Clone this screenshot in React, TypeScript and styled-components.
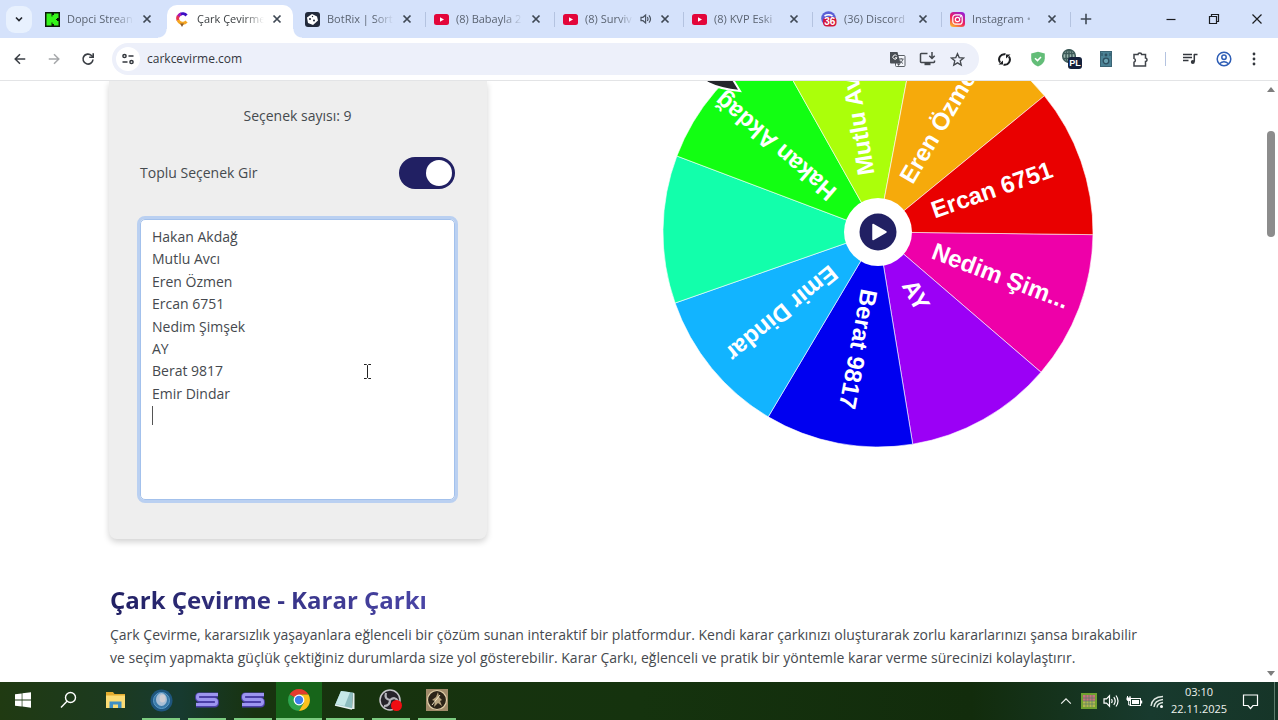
import React from 'react';
import styled, { createGlobalStyle } from 'styled-components';

const Global = createGlobalStyle`
  * { box-sizing: border-box; }
  html, body { margin: 0; padding: 0; }
  body { font-family: "Open Sans", "Noto Sans", sans-serif; background: #fff; color: #3c4043; overflow: hidden; }
  button { font: inherit; color: inherit; border: 0; background: none; padding: 0; }
  a { color: inherit; text-decoration: none; }
  svg { display: block; flex: none; }
`;

const Window = styled.div`
  display: flex;
  flex-direction: column;
  height: 100vh;
`;

/* ---------- tab strip ---------- */

const TabStrip = styled.header`
  display: flex;
  align-items: center;
  height: 38px;
  flex: none;
  background: #d5e2fb;
  padding-left: 6px;
`;

const TabSearch = styled.button`
  display: grid;
  place-items: center;
  width: 26px;
  height: 27px;
  border-radius: 9px;
  background: #e8f1fe;
  margin-right: 5px;
`;

const TabList = styled.nav`
  display: flex;
  align-self: stretch;
`;

const Tab = styled.div<{ $active?: boolean }>`
  position: relative;
  display: flex;
  align-items: center;
  width: ${(p) => (p.$active ? 126 : 129)}px;
  margin: ${(p) => (p.$active ? '5px 4px 0 1px' : '0')};
  padding: ${(p) => (p.$active ? '0 7px 5px 8px' : '0 10px 0 8px')};
  border-radius: 10px 10px 0 0;
  background: ${(p) => (p.$active ? '#fff' : 'transparent')};
  color: ${(p) => (p.$active ? '#3c4043' : '#5b6472')};

  &::before,
  &::after {
    content: '';
    display: ${(p) => (p.$active ? 'block' : 'none')};
    position: absolute;
    bottom: 0;
    width: 9px;
    height: 9px;
  }
  &::before {
    left: -9px;
    background: radial-gradient(circle at 0 0, transparent 8px, #fff 9px);
  }
  &::after {
    right: -9px;
    background: radial-gradient(circle at 100% 0, transparent 8px, #fff 9px);
  }
`;

const TabLink = styled.a`
  display: flex;
  align-items: center;
  flex: 1;
  min-width: 0;
  gap: 7px;
`;

const TabTitle = styled.span`
  flex: 1;
  min-width: 0;
  overflow: hidden;
  white-space: nowrap;
  font-size: 11px;
  line-height: 16px;
  -webkit-mask-image: linear-gradient(to right, #000 70%, transparent);
  mask-image: linear-gradient(to right, #000 70%, transparent);
`;

const TabClose = styled.button`
  display: grid;
  place-items: center;
  width: 18px;
  height: 18px;
  margin-left: 4px;
`;

const Divider = styled.i<{ $h: number }>`
  width: 1px;
  height: ${(p) => p.$h}px;
  background: #b4c3e0;
  flex: none;
`;

const TabDivider = styled(Divider)`
  align-self: center;
  margin-left: -1px;
`;

const NewTab = styled.button`
  display: grid;
  place-items: center;
  width: 30px;
  height: 30px;
`;

const WindowControls = styled.div`
  display: flex;
  margin-left: auto;
`;

const WindowButton = styled.button`
  display: grid;
  place-items: center;
  width: 43px;
  height: 38px;
`;

/* ---------- toolbar ---------- */

const Toolbar = styled.div`
  display: flex;
  align-items: center;
  height: 43px;
  flex: none;
  background: #fff;
  border-bottom: 1px solid #e3e4e6;
  padding: 0 4px 0 3px;
`;

const ToolButton = styled.button<{ $w?: number; $faded?: boolean }>`
  display: grid;
  place-items: center;
  width: ${(p) => p.$w ?? 34}px;
  height: 32px;
  opacity: ${(p) => (p.$faded ? 0.45 : 1)};
`;

const Extensions = styled.div`
  display: flex;
  align-items: center;
  margin-right: 8px;
`;

const Omnibox = styled.div`
  display: flex;
  align-items: center;
  flex: 1;
  height: 32px;
  margin: 0 8px 0 7px;
  padding: 0 7px 0 4px;
  border-radius: 16px;
  background: #edf0fa;
`;

const SiteInfo = styled.button`
  display: grid;
  place-items: center;
  width: 24px;
  height: 24px;
  border-radius: 12px;
  background: #fff;
`;

const Address = styled.input`
  flex: 1;
  min-width: 0;
  border: 0;
  outline: 0;
  background: none;
  padding: 0 0 0 7px;
  font: 12px/20px "Open Sans", "Noto Sans", sans-serif;
  color: #33373d;
`;

/* ---------- page ---------- */

const Viewport = styled.div`
  display: flex;
  flex: 1;
  min-height: 0;
  background: #fff;
`;

const Page = styled.main`
  flex: 1;
  min-width: 0;
  overflow: hidden;
`;

const Container = styled.div`
  max-width: 1046px;
  margin: 0 auto;
`;

const Tool = styled.section`
  display: grid;
  grid-template-columns: 378px 1fr;
  column-gap: 113px;
  align-items: start;
`;

const Card = styled.form`
  display: flex;
  flex-direction: column;
  padding: 23px 32px 39px 31px;
  border-radius: 0 0 8px 8px;
  background: #eeeeee;
  box-shadow: 0 3px 6px rgba(0, 0, 0, 0.18);
  font-size: 14px;
  line-height: 24px;
  color: #454a4f;
`;

const Count = styled.p`
  margin: 0;
  text-align: center;
`;

const ToggleRow = styled.label`
  display: flex;
  justify-content: space-between;
  align-items: center;
  margin: 29px 0 30px;
`;

const Toggle = styled.input`
  appearance: none;
  display: flex;
  width: 56px;
  height: 32px;
  margin: 0;
  padding: 3px;
  border-radius: 16px;
  background: #212063;

  &::before {
    content: '';
    width: 26px;
    height: 26px;
    border-radius: 13px;
    background: #fff;
  }
  &:checked {
    justify-content: flex-end;
  }
`;

const Editor = styled.div`
  position: relative;
`;

const OptionsBox = styled.textarea`
  display: block;
  width: 100%;
  height: 281px;
  resize: none;
  padding: 6px 11px;
  border: 1px solid #a3c1ec;
  border-radius: 5px;
  outline: 3px solid #bad0f1;
  background: #fff;
  font: 14px/1.6 "Open Sans", "Noto Sans", sans-serif;
  color: #45494e;
`;

const Caret = styled.i`
  position: absolute;
  left: 12px;
  top: 187px;
  width: 1px;
  height: 19px;
  background: #555;
`;

const Pointer = styled.svg`
  position: absolute;
  left: 223px;
  top: 145px;
`;

const WheelArea = styled.div`
  display: flex;
  justify-content: center;
`;

const Article = styled.article`
  margin-top: 44px;
  padding: 0 1px;
`;

const Heading = styled.h1`
  width: fit-content;
  margin: 0;
  font-size: 24px;
  line-height: 34px;
  font-weight: 700;
  background: linear-gradient(90deg, #212063, #4a45a6);
  -webkit-background-clip: text;
  background-clip: text;
  color: transparent;
`;

const Copy = styled.p`
  margin: 6px 0 0;
  font-size: 14px;
  line-height: 23px;
  color: #45494e;
`;

const ScrollTrack = styled.div`
  display: flex;
  flex-direction: column;
  align-items: center;
  width: 14px;
  padding: 6px 0;
`;

const ScrollThumb = styled.div`
  width: 8px;
  height: 106px;
  margin-top: 39px;
  margin-bottom: auto;
  border-radius: 4px;
  background: #8c8c8c;
`;

/* ---------- taskbar ---------- */

const Taskbar = styled.footer`
  display: flex;
  align-items: stretch;
  height: 38px;
  flex: none;
  background: linear-gradient(90deg, #203a12 0%, #1c3a20 9%, #173a30 14%, #18330f 20%, #15330e 50%, #122c0c 76%, #183a2e 90%, #163528 100%);
  color: #eef2ee;
`;

const TaskButton = styled.button<{ $open?: boolean; $active?: boolean }>`
  display: flex;
  flex-direction: column;
  align-items: center;
  width: 46px;
  background: ${(p) => (p.$active ? '#17651a' : 'none')};

  &::after {
    content: '';
    width: ${(p) => (p.$active ? 46 : 38)}px;
    height: 2px;
    background: ${(p) => (p.$open ? '#7ccb80' : 'transparent')};
  }
`;

const TaskIcon = styled.span`
  display: grid;
  place-items: center;
  flex: 1;
`;

const Tray = styled.div`
  display: flex;
  align-items: center;
  margin-left: auto;
`;

const TrayButton = styled.button<{ $w?: number }>`
  display: grid;
  place-items: center;
  width: ${(p) => p.$w ?? 23}px;
  height: 38px;
`;

const Clock = styled.time`
  width: 60px;
  padding-bottom: 2px;
  text-align: center;
  font-size: 11px;
  line-height: 17px;
  white-space: nowrap;
`;

const ShowDesktop = styled.i`
  align-self: stretch;
  width: 4px;
  margin-left: 3px;
  border-left: 1px solid #5d7a6c;
`;

/* ---------- icons ---------- */

type LineProps = { d: string; s?: number; w?: number; c?: string };

const Line = ({ d, s = 16, w = 2, c = 'currentColor' }: LineProps) => (
  <svg width={s} height={s} viewBox="0 0 16 16" fill="none" stroke={c} strokeWidth={w}>
    <path d={d} />
  </svg>
);

const Cross = () => <Line d="M4 4l8 8M12 4l-8 8" s={14} w={2} c="#3f4854" />;

const KickIcon = () => (
  <svg width="15" height="15" viewBox="0 0 15 15">
    <rect width="15" height="15" fill="#0b1a08" />
    <path d="M1.500 1.500h5v3h1v-1.500h1.500v-1.500h4.500v4.500h-1.500v1h-1v1h1v1h1.500v4.500h-4.500v-1.500h-1.500v-1.500h-1v3h-5z" fill="#35f51b" />
  </svg>
);

const CarkIcon = () => (
  <svg width="15" height="15" viewBox="0 0 15 15" fill="none" strokeWidth="3">
    <path d="M11.500 3.500A5 5 0 0 0 5 2.500" stroke="#3c0fc4" />
    <path d="M6 2A5 5 0 0 0 3 5" stroke="#a51bb5" />
    <path d="M3.200 4A5 5 0 0 0 3 8.500" stroke="#e8334d" />
    <path d="M3 8A5 5 0 0 0 11.500 9.500" stroke="#f5a623" />
    <path d="M5 11.500h4l-2 3.500z" fill="#8a5a2b" />
  </svg>
);

const BotIcon = () => (
  <svg width="15" height="15" viewBox="0 0 15 15">
    <rect width="15" height="15" rx="3" fill="#222a3b" />
    <path d="M7 2l5 2.500 1 4-5 4.500L3 11 2 5.500z" fill="#fff" />
    <circle cx="5" cy="7" r="1" fill="#222a3b" />
    <circle cx="9" cy="8.500" r="1" fill="#222a3b" />
    <circle cx="7.500" cy="4.500" r=".7" fill="#222a3b" />
  </svg>
);

const YoutubeIcon = () => (
  <svg width="15" height="15" viewBox="0 0 15 15">
    <rect y="2" width="15" height="11" rx="2.500" fill="#e3063a" />
    <path d="M6 5.200l4 2.300-4 2.300z" fill="#fff" />
  </svg>
);

const DiscordIcon = () => (
  <svg width="16" height="16" viewBox="0 0 16 16">
    <circle cx="7.500" cy="7.500" r="7.300" fill="#5b5fd6" />
    <path d="M3.500 5q4-2.500 8 0" stroke="#fff" strokeWidth="1.500" fill="none" />
    <rect x="2" y="6" width="13.500" height="9.500" rx="4" fill="#d3163a" />
    <text x="8.700" y="14" fontFamily="Liberation Sans, sans-serif" fontWeight="700" fontSize="10" textAnchor="middle" fill="#fff">36</text>
  </svg>
);

const InstagramIcon = () => (
  <svg width="15" height="15" viewBox="0 0 15 15">
    <defs>
      <linearGradient id="insta" x1=".2" y1="1" x2=".8" y2="0">
        <stop offset="0" stopColor="#fdb52e" />
        <stop offset=".45" stopColor="#ee1f5f" />
        <stop offset="1" stopColor="#9a1fd6" />
      </linearGradient>
    </defs>
    <rect width="15" height="15" rx="3.500" fill="url(#insta)" />
    <rect x="2.800" y="2.800" width="9.400" height="9.400" rx="2.800" fill="none" stroke="#fff" strokeWidth="1.200" />
    <circle cx="7.500" cy="7.500" r="2.200" fill="none" stroke="#fff" strokeWidth="1.200" />
    <circle cx="10.400" cy="4.700" r=".7" fill="#fff" />
  </svg>
);

const SpeakerIcon = () => (
  <svg width="12" height="12" viewBox="0 0 12 12" fill="none" stroke="#4a5361" strokeWidth="1.200">
    <path d="M1 4.300h2l2.600-2.300v8L3 7.700H1z" />
    <path d="M7.300 4q1.400 2 0 4M9 2.300q3 3.700 0 7.400" />
  </svg>
);

const TuneIcon = () => (
  <svg width="14" height="14" viewBox="0 0 14 14" fill="none" stroke="#33373d" strokeWidth="1.500">
    <circle cx="3.500" cy="4" r="1.600" />
    <path d="M7.500 4h5M1.500 10h5" />
    <circle cx="10.500" cy="10" r="1.600" />
  </svg>
);

const ReloadIcon = () => (
  <svg width="14" height="14" viewBox="0 0 14 14" fill="none" stroke="#3a3e44" strokeWidth="1.600">
    <path d="M12 7.500A5 5 0 1 1 10.500 3.500L12 5" />
    <path d="M12.200 1.200v4h-4" />
  </svg>
);

const TranslateIcon = () => (
  <svg width="17" height="17" viewBox="0 0 17 17">
    <rect x="6.500" y="4.500" width="9.500" height="11" rx="1" fill="#f4f6fb" stroke="#5a5f66" />
    <path d="M1 1h7.500l3 11.500H2a1 1 0 0 1-1-1z" fill="#4a4f56" />
    <path d="M7.700 4.800a2.100 2.100 0 1 0 .3 2H6" fill="none" stroke="#fff" strokeWidth="1" />
    <path d="M10 8h4.500M12.200 7v1M14 8q-.7 3-3 4M11 9.500q1 2 3 3" stroke="#5a5f66" fill="none" />
    <path d="M8 12.500h3.500l-2 2.500z" fill="#4a4f56" />
  </svg>
);

const InstallIcon = () => (
  <svg width="17" height="16" viewBox="0 0 17 16" fill="none" stroke="#43474d" strokeWidth="1.500">
    <path d="M8.500 2.500H2.200a.7.700 0 0 0-.7.700v7.600c0 .4.300.7.700.7h12.600a.7.700 0 0 0 .7-.7V9.500" />
    <path d="M13 1v6M10.300 4.800L13 7.500l2.700-2.700" />
    <path d="M5.500 12h6v2.200h-6z" fill="#43474d" stroke="none" />
  </svg>
);

const StarIcon = () => (
  <svg width="15" height="15" viewBox="0 0 16 16" fill="none" stroke="#43474d" strokeWidth="1.400">
    <path d="M8 1.800l1.800 4.200 4.700.4-3.600 3 1.100 4.600L8 11.600 4 14l1.100-4.600-3.600-3L6.200 6z" />
  </svg>
);

const SyncIcon = () => (
  <svg width="15" height="15" viewBox="0 0 15 15" fill="none" stroke="#1d1f22" strokeWidth="2">
    <path d="M8.500 2.300A5.200 5.200 0 0 0 3.200 10.500M6.500 12.700A5.200 5.200 0 0 0 11.800 4.500" />
    <path d="M1.500 12.500h4.500V8.500zM13.500 2.500H9v4z" fill="#1d1f22" stroke="none" />
  </svg>
);

const ShieldIcon = () => (
  <svg width="16" height="16" viewBox="0 0 16 16">
    <path d="M8 .8l6.800 1.800v4.800q0 5-6.800 8-6.800-3-6.800-8V2.600z" fill="#63bd78" />
    <path d="M5 7.200l2.500 2.400L11 6" stroke="#fff" strokeWidth="1.500" fill="none" />
  </svg>
);

const GlobeIcon = () => (
  <svg width="22" height="22" viewBox="0 0 22 22">
    <g fill="none" stroke="#3c5a58" strokeWidth="1.500">
      <circle cx="8" cy="8" r="6.300" fill="#9bb5ae" />
      <ellipse cx="8" cy="8" rx="3" ry="6.300" />
      <path d="M2 5.500h12M2 10.500h12M8 1.700v12.600" />
    </g>
    <rect x="7" y="9" width="14" height="12" rx="3" fill="#15213c" />
    <text x="14" y="18.300" fontFamily="Liberation Sans, sans-serif" fontWeight="700" fontSize="9" textAnchor="middle" fill="#fff">PL</text>
  </svg>
);

const CabinetIcon = () => (
  <svg width="12" height="16" viewBox="0 0 12 16">
    <rect x=".5" y=".5" width="11" height="15" fill="#4b8295" stroke="#3b6474" />
    <circle cx="6" cy="10" r="2.800" fill="#6aa2b2" stroke="#2d4f60" strokeWidth="1.300" />
    <circle cx="6" cy="4" r="1.400" fill="#2d4f60" />
    <path d="M2 2v3M10 2v3" stroke="#2d4f60" />
  </svg>
);

const PuzzleIcon = () => (
  <svg width="17" height="17" viewBox="0 0 17 17" fill="none" stroke="#3f4349" strokeWidth="1.500">
    <path d="M2 3.500h4a1.800 1.500 0 0 1 3.600 0h3.900V7a1.500 1.800 0 0 1 0 3.600V15H2v-3.800a2 2 0 0 0 0-3.800z" />
  </svg>
);

const QueueIcon = () => (
  <svg width="16" height="14" viewBox="0 0 16 14">
    <path d="M1 2.500h9M1 5.500h9M1 8.500h5.500" stroke="#33373d" strokeWidth="1.400" />
    <path d="M12 2.500h3.500M12.300 2v7.800" stroke="#33373d" strokeWidth="1.500" />
    <circle cx="10.800" cy="10" r="2" fill="#33373d" />
  </svg>
);

const ProfileIcon = () => (
  <svg width="16" height="16" viewBox="0 0 16 16" fill="none" stroke="#2d5db5" strokeWidth="1.500">
    <circle cx="8" cy="8" r="6.800" />
    <circle cx="8" cy="6.300" r="2.200" />
    <path d="M3.500 12.800q4.500-4 9 0" />
  </svg>
);

const MenuIcon = () => (
  <svg width="4" height="14" viewBox="0 0 4 14" fill="#33373d">
    <circle cx="2" cy="2" r="1.400" />
    <circle cx="2" cy="7" r="1.400" />
    <circle cx="2" cy="12" r="1.400" />
  </svg>
);

const Triangle = ({ d }: { d: string }) => (
  <svg width="8" height="5" viewBox="0 0 8 5" fill="#7d7d7d">
    <path d={d} />
  </svg>
);

const WindowsIcon = () => (
  <svg width="16" height="16" viewBox="0 0 16 16" fill="#fff">
    <path d="M0 2.300l6.700-.9v6.200H0zM7.400 1.300L16 .2v7.400H7.400zM0 8.400h6.700v6.200L0 13.700zM7.400 8.400H16v7.400l-8.600-1.200z" />
  </svg>
);

const SearchIcon = () => (
  <svg width="18" height="18" viewBox="0 0 18 18" fill="none" stroke="#fff" strokeWidth="1.400">
    <circle cx="10.500" cy="6.500" r="5" />
    <path d="M7 10.200L1 16.500" />
  </svg>
);

const FolderIcon = () => (
  <svg width="21" height="18" viewBox="0 0 21 18">
    <path d="M1 1h7l1.500 2H20v13H1z" fill="#e3ac2f" />
    <path d="M1 4.500h19V17H1z" fill="#fbdc74" />
    <path d="M4.500 17V10.500h12V17h-3.500v-3.500h-5V17z" fill="#3f8fc4" />
  </svg>
);

const OrbIcon = () => (
  <svg width="23" height="23" viewBox="0 0 23 23">
    <circle cx="11.500" cy="11.500" r="11" fill="#1f567f" />
    <circle cx="11.500" cy="11.500" r="8" fill="#3a79a8" stroke="#5d9cc9" />
    <ellipse cx="11.500" cy="10.500" rx="5.500" ry="6.500" fill="#a9bfd6" />
    <ellipse cx="12.500" cy="9.500" rx="3" ry="4" fill="#cfcdd4" />
  </svg>
);

const StreamIcon = () => (
  <svg width="24" height="16" viewBox="0 0 24 16" fill="none">
    <path d="M23 3H4.500q-2 0-2 2.300T4.500 8h15q2 0 2 2.500t-2 2.500H1" stroke="#4b3fa8" strokeWidth="5" />
    <path d="M23 2.500H4.500q-2 0-2 2.500t2 2.500h15q2 0 2 2.500t-2 2.500H1" stroke="#9c95f0" strokeWidth="3" />
  </svg>
);

const ChromeIcon = () => (
  <svg width="22" height="22" viewBox="0 0 22 22">
    <path d="M11 11L1.500 5.500A11 11 0 0 1 20.500 5.500H11z" fill="#e33b2e" />
    <path d="M11 11L1.500 5.500A11 11 0 0 0 11 22l4.800-8.200z" fill="#2da44e" />
    <path d="M11 5.500h9.500A11 11 0 0 1 11 22l4.800-8.200z" fill="#fbc11d" />
    <circle cx="11" cy="11" r="5.400" fill="#fff" />
    <circle cx="11" cy="11" r="4.200" fill="#3b7ded" />
  </svg>
);

const NoteIcon = () => (
  <svg width="22" height="20" viewBox="0 0 22 20">
    <path d="M7 1l12 1.500-1 16.500-17-4z" fill="#8dbdc0" />
    <path d="M7 1l9 1.200L10.500 16 1.500 14z" fill="#c5e8e8" />
    <path d="M19 2.500l1.500 1V19L18 19z" fill="#e5efef" />
    <path d="M1 15l17 4" stroke="#e8f2f2" strokeWidth="1.500" />
  </svg>
);

const ObsIcon = () => (
  <svg width="24" height="23" viewBox="0 0 24 23">
    <circle cx="11" cy="11" r="10" fill="#26232a" stroke="#c6c6ca" strokeWidth="1.500" />
    <g fill="none" stroke="#b5b5bb" strokeWidth="2.200">
      <path d="M11 11Q5 10 7 4M11 11q5-4 8 1M11 11q0 6-6 6" />
    </g>
    <circle cx="17.500" cy="16.500" r="5.500" fill="#f00d12" />
  </svg>
);

const CompassIcon = () => (
  <svg width="22" height="22" viewBox="0 0 22 22">
    <rect width="22" height="22" fill="#a08b6a" />
    <circle cx="11" cy="11" r="9.500" fill="#2b2418" stroke="#e0cfa8" strokeWidth="1.200" />
    <path d="M12 3l1 5 3 3-2 1 2 5-4-3-4 4 1-6-3-1 4-3z" fill="#b9a680" />
    <path d="M6 16L14 6" stroke="#f3e7c7" />
  </svg>
);

const PixelIcon = () => (
  <svg width="16" height="16" viewBox="0 0 16 16">
    <rect width="16" height="16" fill="#6fa02f" />
    <rect x="2" y="2" width="12" height="12" fill="#c9707c" />
    <rect x="2" y="8" width="12" height="6" fill="#b3b84c" />
    <path d="M2 5h12M2 8h12M2 11h12M5 2v12M8 2v12M11 2v12" stroke="#557a66" strokeOpacity=".7" />
  </svg>
);

const VolumeIcon = () => (
  <svg width="17" height="14" viewBox="0 0 17 14" fill="none" stroke="#fff" strokeWidth="1.200">
    <path d="M1 4.800h2.500l3-3v10.400l-3-3H1z" />
    <path d="M8.500 5q1.300 2 0 4M10.800 3.200q2.800 3.800 0 7.600M13 1.500q4 5.500 0 11" />
  </svg>
);

const BatteryIcon = () => (
  <svg width="17" height="13" viewBox="0 0 17 13">
    <rect x="4.500" y="3.500" width="10" height="7" fill="none" stroke="#fff" />
    <rect x="6" y="5" width="7" height="4" fill="#fff" />
    <path d="M15 5.500h1.200v3H15z" fill="#fff" />
    <path d="M1.500 1v2M4 1v2M2.700 6v4h2" stroke="#fff" fill="none" />
    <path d="M.5 2.500h4.500v2l-1 1.500H1.500l-1-1.500z" fill="#fff" />
  </svg>
);

const WifiIcon = () => (
  <svg width="15" height="15" viewBox="0 0 15 15" fill="none" stroke="#dfe8e2" strokeWidth="1.300">
    <path d="M1 12Q2 3 13 2.500M4 13q.5-6.500 9-7.500M7 13.500Q7 9.500 13 8.500" />
    <circle cx="11.500" cy="12.500" r="1.500" fill="#fff" stroke="none" />
  </svg>
);

const NoticeIcon = () => (
  <svg width="17" height="17" viewBox="0 0 17 17" fill="none" stroke="#fff" strokeWidth="1.200">
    <path d="M1.500 2h14v10.500h-4.500l-2.500 3-2.500-3H1.500z" />
  </svg>
);

/* ---------- wheel ---------- */

const SLICE = 40;
const START = 0.7;
const RADIUS = 215;

const slices = [
  { label: 'Nedim Şim...', color: '#ee00a9' },
  { label: 'AY', color: '#9b00f6' },
  { label: 'Berat 9817', color: '#0000f0' },
  { label: 'Emir Dindar', color: '#12b4ff' },
  { label: '', color: '#12ffab' },
  { label: 'Hakan Akdağ', color: '#12ff12' },
  { label: 'Mutlu Avcı', color: '#abff0a' },
  { label: 'Eren Özmen', color: '#f6aa0b' },
  { label: 'Ercan 6751', color: '#e90000' },
];

const point = (deg: number) => {
  const a = (deg * Math.PI) / 180;
  return `${RADIUS * Math.cos(a)} ${RADIUS * Math.sin(a)}`;
};

const Wheel = () => (
  <svg width="432" height="368" viewBox="-216 -151 432 368" role="img" aria-label="Çark">
    {slices.map((s, i) => {
      const from = START + i * SLICE;
      return (
        <path
          key={i}
          d={`M0 0L${point(from)}A${RADIUS} ${RADIUS} 0 0 1 ${point(from + SLICE)}Z`}
          fill={s.color}
          stroke="#fff"
          strokeOpacity=".6"
        />
      );
    })}
    {slices.map((s, i) => (
      <text
        key={i}
        x="58"
        y="6"
        transform={`rotate(${START + (i + 0.5) * SLICE})`}
        fontFamily="Liberation Sans, Arial, sans-serif"
        fontWeight="700"
        fontSize="24"
        fill="#fff"
      >
        {s.label}
      </text>
    ))}
    <path d="M-176 -154L-170 -149Q-158 -143 -138 -141L-146 -154Z" fill="#23262b" stroke="#fff" strokeWidth="2" />
    <circle r="34" fill="#fff" />
    <circle r="18.500" fill="#212063" />
    <path d="M-5 -7.500L8 0L-5 7.500Z" fill="#fff" stroke="#fff" strokeWidth="1.500" strokeLinejoin="round" />
  </svg>
);

/* ---------- data ---------- */

const tabs = [
  { title: 'Dopci Strean', icon: <KickIcon /> },
  { title: 'Çark Çevirme', icon: <CarkIcon />, active: true },
  { title: 'BotRix | Sort', icon: <BotIcon />, divided: true },
  { title: '(8) Babayla 2', icon: <YoutubeIcon />, divided: true },
  { title: '(8) Surviv', icon: <YoutubeIcon />, divided: true, audio: true },
  { title: '(8) KVP Eski', icon: <YoutubeIcon />, divided: true },
  { title: '(36) Discord', icon: <DiscordIcon />, divided: true },
  { title: 'Instagram •', icon: <InstagramIcon />, divided: true },
];

const apps = [
  { name: 'Başlat', icon: <WindowsIcon /> },
  { name: 'Ara', icon: <SearchIcon /> },
  { name: 'Dosya Gezgini', icon: <FolderIcon /> },
  { name: 'Küre', icon: <OrbIcon />, open: true },
  { name: 'S', icon: <StreamIcon />, open: true },
  { name: 'S', icon: <StreamIcon />, open: true },
  { name: 'Chrome', icon: <ChromeIcon />, open: true, active: true },
  { name: 'Not Defteri', icon: <NoteIcon />, open: true },
  { name: 'OBS', icon: <ObsIcon />, open: true },
  { name: 'Pusula', icon: <CompassIcon />, open: true },
];

const names = `Hakan Akdağ
Mutlu Avcı
Eren Özmen
Ercan 6751
Nedim Şimşek
AY
Berat 9817
Emir Dindar
`;

export default function App() {
  return (
    <Window>
      <Global />
      <TabStrip>
        <TabSearch aria-label="Sekme ara"><Line d="M4 6l4 4 4-4" s={12} w={2.2} c="#23272d" /></TabSearch>
        <TabList>
          {tabs.map((t, i) => (
            <React.Fragment key={i}>
              <Tab $active={t.active}>
                <TabLink href="#">
                  {t.icon}
                  <TabTitle>{t.title}</TabTitle>
                  {t.audio && <SpeakerIcon />}
                </TabLink>
                <TabClose aria-label="Kapat"><Cross /></TabClose>
              </Tab>
              {t.divided && <TabDivider $h={15} />}
            </React.Fragment>
          ))}
        </TabList>
        <NewTab aria-label="Yeni sekme"><Line d="M8 2v12M2 8h12" s={14} w={1.8} c="#3f4854" /></NewTab>
        <WindowControls>
          <WindowButton aria-label="Küçült"><Line d="M3.500 8.500h9" w={1.2} c="#1b1d20" /></WindowButton>
          <WindowButton aria-label="Geri yükle"><Line d="M3.500 5.500h7v7h-7zM5.500 5.500v-2h7v7h-2" w={1.2} c="#1b1d20" /></WindowButton>
          <WindowButton aria-label="Pencereyi kapat"><Line d="M3.500 3.500l9 9M12.500 3.500l-9 9" w={1.2} c="#1b1d20" /></WindowButton>
        </WindowControls>
      </TabStrip>

      <Toolbar>
        <ToolButton aria-label="Geri"><Line d="M14 8H3M8 2.500L2.500 8 8 13.500" s={14} w={1.7} c="#3a3e44" /></ToolButton>
        <ToolButton aria-label="İleri" $faded><Line d="M2 8h11M8 2.500L13.500 8 8 13.500" s={14} w={1.7} c="#3a3e44" /></ToolButton>
        <ToolButton aria-label="Yenile"><ReloadIcon /></ToolButton>
        <Omnibox>
          <SiteInfo aria-label="Site bilgileri"><TuneIcon /></SiteInfo>
          <Address aria-label="Adres" defaultValue="carkcevirme.com" />
          <ToolButton $w={30} aria-label="Çevir"><TranslateIcon /></ToolButton>
          <ToolButton $w={30} aria-label="Yükle"><InstallIcon /></ToolButton>
          <ToolButton $w={30} aria-label="Yer işareti"><StarIcon /></ToolButton>
        </Omnibox>
        <Extensions>
          <ToolButton aria-label="Eşitle"><SyncIcon /></ToolButton>
          <ToolButton aria-label="Kalkan"><ShieldIcon /></ToolButton>
          <ToolButton aria-label="Dil"><GlobeIcon /></ToolButton>
          <ToolButton aria-label="Dolap"><CabinetIcon /></ToolButton>
          <ToolButton aria-label="Uzantılar"><PuzzleIcon /></ToolButton>
        </Extensions>
        <Divider $h={14} />
        <ToolButton $w={48} aria-label="Medya"><QueueIcon /></ToolButton>
        <ToolButton $w={20} aria-label="Profil"><ProfileIcon /></ToolButton>
        <ToolButton $w={40} aria-label="Menü"><MenuIcon /></ToolButton>
      </Toolbar>

      <Viewport>
        <Page>
          <Container>
            <Tool>
              <Card>
                <Count>Seçenek sayısı: 9</Count>
                <ToggleRow>
                  Toplu Seçenek Gir
                  <Toggle type="checkbox" role="switch" defaultChecked />
                </ToggleRow>
                <Editor>
                  <OptionsBox aria-label="Seçenekler" spellCheck={false} defaultValue={names} />
                  <Caret />
                  <Pointer width="9" height="15" viewBox="0 0 9 15" fill="none" stroke="#222">
                    <path d="M1 .5h2.500l1 1 1-1H8M4.500 1.500v12M1 14.500h2.500l1-1 1 1H8" />
                  </Pointer>
                </Editor>
              </Card>
              <WheelArea><Wheel /></WheelArea>
            </Tool>
            <Article>
              <Heading>Çark Çevirme - Karar Çarkı</Heading>
              <Copy>
                Çark Çevirme, kararsızlık yaşayanlara eğlenceli bir çözüm sunan interaktif bir platformdur. Kendi karar
                çarkınızı oluşturarak zorlu kararlarınızı şansa bırakabilir ve seçim yapmakta güçlük çektiğiniz
                durumlarda size yol gösterebilir. Karar Çarkı, eğlenceli ve pratik bir yöntemle karar verme sürecinizi
                kolaylaştırır.
              </Copy>
            </Article>
          </Container>
        </Page>
        <ScrollTrack>
          <Triangle d="M0 5L4 0L8 5z" />
          <ScrollThumb />
          <Triangle d="M0 0L4 5L8 0z" />
        </ScrollTrack>
      </Viewport>

      <Taskbar>
        {apps.map((a, i) => (
          <TaskButton key={i} aria-label={a.name} $open={a.open} $active={a.active}>
            <TaskIcon>{a.icon}</TaskIcon>
          </TaskButton>
        ))}
        <Tray>
          <TrayButton aria-label="Gizli simgeler"><Line d="M2.500 11L8 5.500l5.500 5.500" s={14} w={1.4} /></TrayButton>
          <TrayButton aria-label="Uygulama"><PixelIcon /></TrayButton>
          <TrayButton aria-label="Ses"><VolumeIcon /></TrayButton>
          <TrayButton aria-label="Pil"><BatteryIcon /></TrayButton>
          <TrayButton aria-label="Ağ"><WifiIcon /></TrayButton>
          <Clock>03:10<br />22.11.2025</Clock>
          <TrayButton $w={42} aria-label="Bildirimler"><NoticeIcon /></TrayButton>
          <ShowDesktop />
        </Tray>
      </Taskbar>
    </Window>
  );
}
